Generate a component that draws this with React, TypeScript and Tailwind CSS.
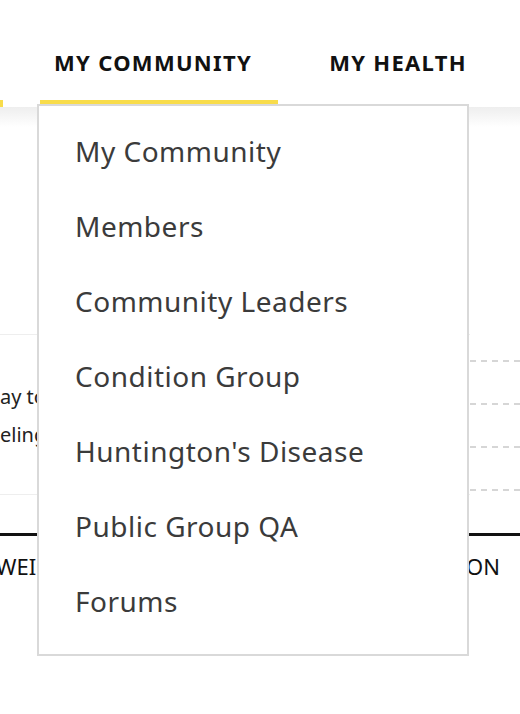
import { ChevronDown } from "lucide-react";

const menuItems = [
  "My Community",
  "Members",
  "Community Leaders",
  "Condition Group",
  "Huntington's Disease",
  "Public Group QA",
  "Forums",
];

function Tab({ label, active, shift = "" }: { label: string; active?: boolean; shift?: string }) {
  return (
    <div
      className={`flex h-full items-center justify-center border-b-[5px] pt-[24px] ${
        active ? "border-[#f8dc4b]" : "border-transparent"
      }`}
    >
      <span className={`text-[22px] font-bold uppercase tracking-[1.3px] text-[#111] ${shift}`}>{label}</span>
    </div>
  );
}

export default function App() {
  return (
    <div
      className="relative h-[714px] w-[520px] overflow-hidden bg-white"
      style={{ fontFamily: '"Noto Sans", "Open Sans", sans-serif' }}
    >
      {/* top nav */}
      <header className="flex h-[107px] items-stretch bg-white">
        <div className="h-full w-[3px] border-b-[7px] border-[#f8dc4b]" />
        <div className="ml-[37px] w-[238px] pb-[2px]">
          <Tab label="My Community" active shift="mr-[12px]" />
        </div>
        <div className="ml-[45px] w-[150px] pb-[2px]">
          <Tab label="My Health" />
        </div>
      </header>
      <div className="h-[20px] bg-gradient-to-b from-[#eeeeee] to-white" />

      {/* page content behind the menu */}
      <div className="mt-[207px] flex">
        <div className="w-[470px] border-y border-[#eeeeee] pb-[40px] pt-[43px] text-[20px] leading-[38px] text-[#222]">
          <p>ay to track your</p>
          <p>eling today</p>
        </div>
        <div className="flex flex-1 flex-col gap-[41px] pt-[26px]">
          {[0, 1, 2, 3].map((i) => (
            <div key={i} className="h-[2px] border-t-2 border-dashed border-[#d6d6d6]" />
          ))}
        </div>
      </div>
      <div className="mt-[38px] h-[3px] bg-[#111]" />
      <div className="flex justify-between pr-[20px] pt-[14px] text-[22px] text-[#111]">
        <span className="-ml-[4px]">WEIGHT</span>
        <span className="flex items-center gap-1">
          DURATION
          <ChevronDown className="hidden" size={16} />
        </span>
      </div>

      {/* dropdown menu */}
      <div className="absolute left-[37px] top-[104px] w-[432px] border-2 border-[#d9d9d9] bg-white pb-[15px] pt-[8px]">
        {menuItems.map((item) => (
          <div
            key={item}
            className="py-[19px] pl-[36px] text-[28px] leading-[37px] tracking-[0.5px] text-[#3b3b3b]"
          >
            {item}
          </div>
        ))}
      </div>
    </div>
  );
}
